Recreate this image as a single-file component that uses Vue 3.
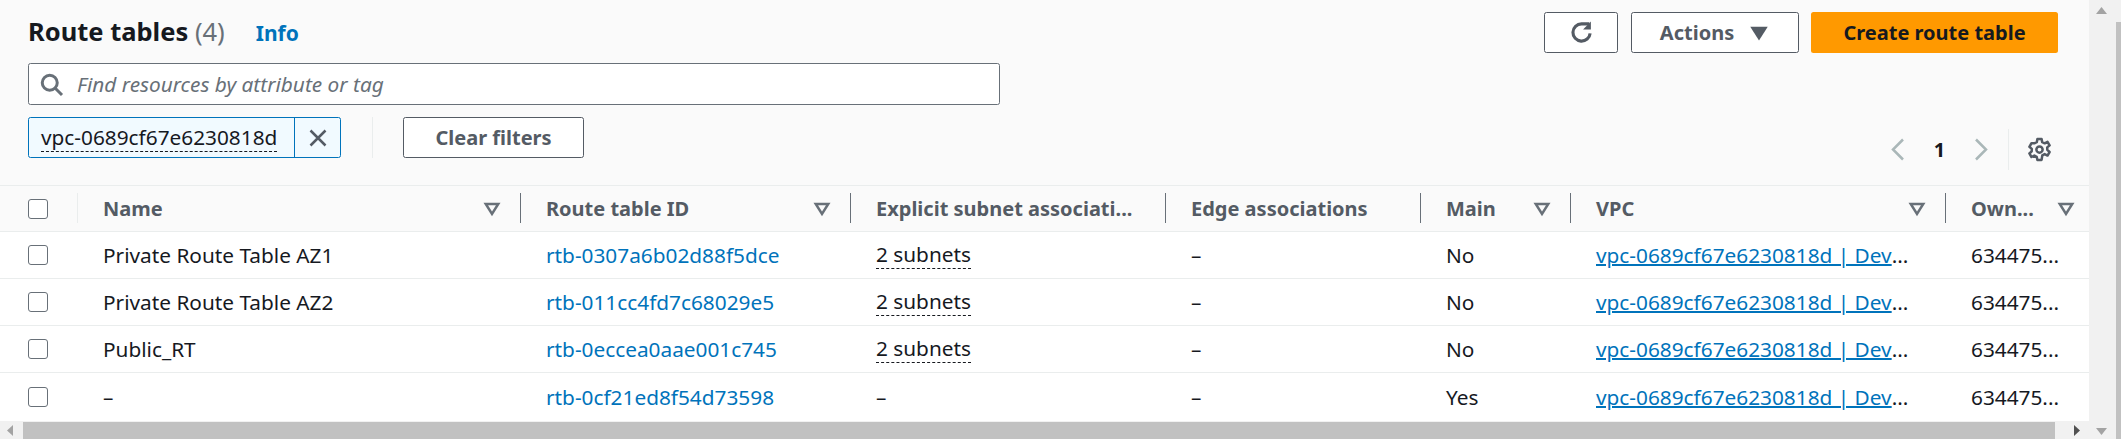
<template>
  <div class="page">
    <div class="main">
      <header class="head">
        <div class="head__top">
          <div class="head__title">
            <h1>Route tables <span class="count">(4)</span></h1>
            <a class="info">Info</a>
          </div>
          <div class="head__actions">
            <button class="btn btn--icon" type="button">
              <svg width="25" height="25" viewBox="0 0 16 16" fill="none" stroke="#545b64" stroke-width="2">
                <path d="M13.5 8.5A5.5 5.5 0 1 1 8 2.500h5" />
                <path d="M14 1v5H9z" fill="#545b64" stroke="none" />
              </svg>
            </button>
            <button class="btn btn--actions" type="button">
              Actions
              <svg width="20" height="20" viewBox="0 0 16 16"><path d="M1 3h14L8 14z" fill="#545b64" /></svg>
            </button>
            <button class="btn btn--primary" type="button">Create route table</button>
          </div>
        </div>

        <div class="search">
          <svg width="25" height="25" viewBox="0 0 20 20" fill="none" stroke="#687078" stroke-width="2.4">
            <circle cx="8.6" cy="8.6" r="6" />
            <path d="M13 13l5.4 5.4" />
          </svg>
          <span>Find resources by attribute or tag</span>
        </div>

        <div class="filters">
          <div class="filters__left">
            <div class="token">
              <span class="token__label"><span class="dotted">vpc-0689cf67e6230818d</span></span>
              <span class="token__close">
                <svg width="20" height="20" viewBox="0 0 16 16" fill="none" stroke="#545b64" stroke-width="2">
                  <path d="M2 2l12 12M14 2L2 14" />
                </svg>
              </span>
            </div>
            <span class="filters__sep"></span>
            <button class="btn btn--clear" type="button">Clear filters</button>
          </div>
          <div class="pager">
            <svg width="20" height="25" viewBox="0 0 16 20" fill="none" stroke="#aab7b8" stroke-width="2"><path d="M12 2L4 10l8 8" /></svg>
            <span class="pager__num">1</span>
            <svg width="20" height="25" viewBox="0 0 16 20" fill="none" stroke="#aab7b8" stroke-width="2"><path d="M4 2l8 8-8 8" /></svg>
            <span class="pager__sep"></span>
            <svg width="25" height="25" viewBox="0 0 24 24" fill="none" stroke="#545b64" stroke-width="2.4" stroke-linejoin="round">
              <path d="M10 2h4l.6 3 2.4 1.1 2.7-1.5 2 3.4-2.3 2 .1 2.4 2.2 2-2 3.4-2.8-1.4-2.2 1.2L14 22h-4l-.7-3-2.2-1.2-2.8 1.4-2-3.4 2.2-2 .1-2.4-2.3-2 2-3.400L7 6.100 9.400 5z" />
              <circle cx="12" cy="12" r="3" />
            </svg>
          </div>
        </div>
      </header>

      <div class="table">
        <div class="row row--head">
          <div class="cell cell--check cell--rule"><span class="checkbox"></span></div>
          <div v-for="col in columns" :key="col.label" class="cell cell--head">
            <span>{{ col.label }}</span>
            <svg v-if="col.sort" width="20" height="20" viewBox="0 0 16 16" fill="none" stroke="#687078" stroke-width="2">
              <path d="M3 4h10l-5 8z" />
            </svg>
          </div>
        </div>

        <div v-for="row in rows" :key="row.id" class="row">
          <div class="cell cell--check"><span class="checkbox"></span></div>
          <div class="cell">{{ row.name }}</div>
          <div class="cell"><a class="link">{{ row.id }}</a></div>
          <div class="cell"><span v-if="row.subnets" class="dotted dotted--cell">{{ row.subnets }}</span><template v-else>–</template></div>
          <div class="cell">–</div>
          <div class="cell">{{ row.main }}</div>
          <div class="cell"><a class="link link--vpc">vpc-0689cf67e6230818d | Dev</a>...</div>
          <div class="cell">634475...</div>
        </div>
      </div>
    </div>

    <div class="vbar">
      <svg width="11" height="7" viewBox="0 0 11 7"><path d="M5.500 0L11 7H0z" fill="#a3a3a3" /></svg>
      <svg width="11" height="7" viewBox="0 0 11 7"><path d="M5.500 7L0 0h11z" fill="#a3a3a3" /></svg>
      <div class="vbar__thumb"></div>
    </div>

    <div class="hbar">
      <svg width="6" height="11" viewBox="0 0 6 11"><path d="M0 5.500L6 0v11z" fill="#a3a3a3" /></svg>
      <div class="hbar__thumb"></div>
      <svg width="6" height="11" viewBox="0 0 6 11"><path d="M6 5.500L0 0v11z" fill="#505050" /></svg>
    </div>
  </div>
</template>

<script setup>
  const columns = [
    { label: 'Name', sort: true },
    { label: 'Route table ID', sort: true },
    { label: 'Explicit subnet associati...', sort: false },
    { label: 'Edge associations', sort: false },
    { label: 'Main', sort: true },
    { label: 'VPC', sort: true },
    { label: 'Own...', sort: true }
  ]

  const rows = [
    { name: 'Private Route Table AZ1', id: 'rtb-0307a6b02d88f5dce', subnets: '2 subnets', main: 'No' },
    { name: 'Private Route Table AZ2', id: 'rtb-011cc4fd7c68029e5', subnets: '2 subnets', main: 'No' },
    { name: 'Public_RT', id: 'rtb-0eccea0aae001c745', subnets: '2 subnets', main: 'No' },
    { name: '–', id: 'rtb-0cf21ed8f54d73598', subnets: '', main: 'Yes' }
  ]
</script>

<style scoped>
  .page {
    display: grid;
    grid-template-columns: 2089px 32px;
    grid-template-rows: 421px 18px;
    width: 2121px;
    height: 439px;
    overflow: hidden;
    font-family: "Noto Sans", "Open Sans", sans-serif;
    font-size: 20.8px;
    color: #16191f;
    background: #fff;
  }

  .main {
    min-width: 0;
    overflow: hidden;
  }

  .head {
    height: 186px;
    box-sizing: border-box;
    padding: 12px 31px 0 28px;
    background: #fafafa;
    border-bottom: 1px solid #eaeded;
  }

  .head__top {
    display: flex;
    justify-content: space-between;
    height: 51px;
  }

  .head__title {
    display: flex;
    align-items: baseline;
    gap: 31px;
    padding-top: 2px;
  }

  h1 {
    margin: 0;
    font-size: 25.5px;
    font-weight: 700;
    line-height: 34px;
  }

  .count {
    font-weight: 400;
    color: #687078;
  }

  .info {
    color: #0073bb;
    font-size: 21px;
    font-weight: 700;
  }

  .head__actions {
    display: flex;
    gap: 12.5px;
    height: 41px;
  }

  .btn {
    display: inline-flex;
    align-items: center;
    justify-content: center;
    box-sizing: border-box;
    height: 41px;
    padding: 0;
    border: 1px solid #545b64;
    border-radius: 2.500px;
    background: #fff;
    color: #545b64;
    font: inherit;
    font-size: 20px;
    font-weight: 700;
  }

  .btn--icon {
    width: 74px;
  }

  .btn--actions {
    width: 168px;
    gap: 15px;
  }

  .btn--primary {
    width: 247px;
    border: 0;
    background: #ff9900;
    color: #16191f;
  }

  .btn--clear {
    width: 181px;
  }

  .search {
    display: flex;
    align-items: center;
    gap: 13px;
    box-sizing: border-box;
    width: 972px;
    height: 42px;
    padding-left: 10px;
    border: 1px solid #687078;
    border-radius: 2.500px;
    background: #fff;
    color: #687078;
    font-style: italic;
  }

  .filters {
    display: flex;
    justify-content: space-between;
    align-items: flex-start;
    margin-top: 12px;
  }

  .filters__left {
    display: flex;
    align-items: center;
    height: 41px;
  }

  .token {
    display: flex;
    box-sizing: border-box;
    width: 313px;
    height: 41px;
    border: 1px solid #0073bb;
    border-radius: 2.500px;
    background: #f1faff;
  }

  .token__label {
    display: flex;
    align-items: center;
    box-sizing: border-box;
    width: 266px;
    padding-left: 12px;
    border-right: 1px solid #0073bb;
  }

  .token__close {
    display: flex;
    flex: 1;
    align-items: center;
    justify-content: center;
  }

  .dotted {
    border-bottom: 1px dashed #16191f;
    line-height: 27px;
  }

  .filters__sep {
    width: 1px;
    height: 41px;
    margin: 0 30px 0 31px;
    background: #eaeded;
  }

  .pager {
    display: flex;
    align-items: center;
    height: 41px;
    margin: 12px 6px 0 0;
  }

  .pager__num {
    width: 63px;
    text-align: center;
    font-size: 20px;
    font-weight: 700;
  }

  .pager__sep {
    width: 1px;
    height: 41px;
    margin: 0 18px 0 17px;
    background: #eaeded;
  }

  .row {
    display: grid;
    grid-template-columns: 78px 443px 330px 315px 255px 150px 375px 143px;
    height: 47px;
    box-sizing: border-box;
    border-bottom: 1px solid #eaeded;
  }

  .row:last-child {
    height: 48px;
    border-bottom: 0;
  }

  .row--head {
    height: 46px;
    background: #fafafa;
    color: #545b64;
    font-size: 20px;
    font-weight: 700;
  }

  .cell {
    display: flex;
    align-items: center;
    min-width: 0;
    padding-left: 25px;
    white-space: nowrap;
  }

  .cell--check {
    padding-left: 28px;
  }

  .cell--head {
    position: relative;
    justify-content: space-between;
    padding-right: 19px;
  }

  .cell--head:last-child {
    padding-right: 13px;
  }

  .cell--head::after,
  .cell--rule::after {
    content: "";
    position: absolute;
    top: 7px;
    right: 0;
    bottom: 8px;
    width: 1px;
    background: #687078;
  }

  .cell--head:last-child::after {
    display: none;
  }

  .cell--rule {
    position: relative;
  }

  .cell--rule::after {
    background: #eaeded;
  }

  .checkbox {
    box-sizing: border-box;
    width: 20px;
    height: 20px;
    border: 1.500px solid #687078;
    border-radius: 3px;
    background: #fff;
  }

  .link {
    color: #0073bb;
  }

  .link--vpc {
    text-decoration: underline;
    text-decoration-thickness: 2px;
  }

  .vbar {
    position: relative;
    grid-row: 1 / span 2;
    grid-column: 2;
    display: flex;
    flex-direction: column;
    justify-content: space-between;
    box-sizing: border-box;
    padding: 7px 15px 4px 7px;
    background: #f1f1f1;
  }

  .vbar__thumb {
    position: absolute;
    top: 22px;
    right: 0;
    bottom: 0;
    width: 5px;
    background: #c1c1c1;
  }

  .hbar {
    display: flex;
    align-items: center;
    padding: 0 9px 0 7px;
    background: #f1f1f1;
  }

  .hbar__thumb {
    flex: 1;
    align-self: stretch;
    margin: 1px 19px 0 10px;
    background: #c1c1c1;
  }
</style>

<style>
  body {
    margin: 0;
    overflow: hidden;
  }
</style>
